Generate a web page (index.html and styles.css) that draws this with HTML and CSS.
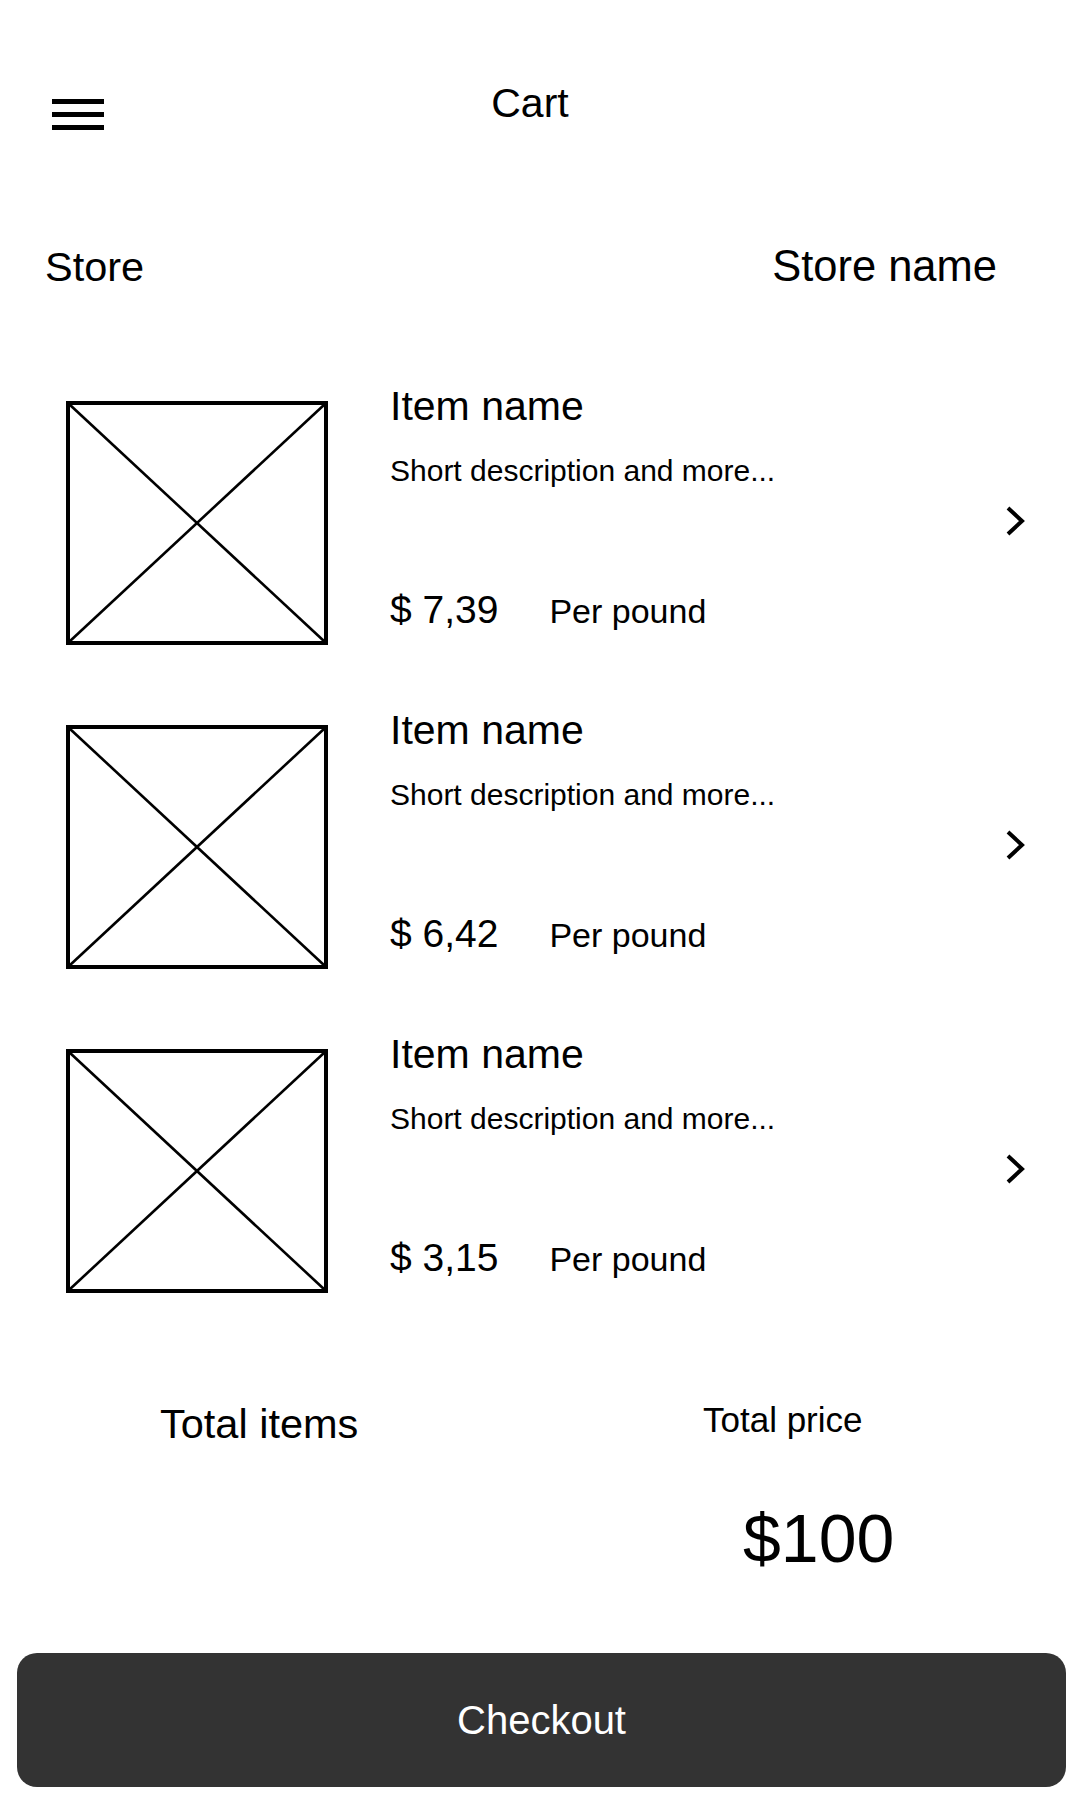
FILE: index.html
```html
<!DOCTYPE html>
<html lang="en">
<head>
  <meta charset="UTF-8">
  <meta name="viewport" content="width=device-width, initial-scale=1.0">
  <title>Cart</title>
  <link rel="stylesheet" href="styles.css">
</head>
<body>
  <header class="topbar">
    <button class="menu" aria-label="Menu">
      <span></span><span></span><span></span>
    </button>
    <h1 class="title">Cart</h1>
    <div></div>
  </header>

  <div class="store-row">
    <span class="store-label">Store</span>
    <span class="store-name">Store name</span>
  </div>

  <main class="items">
    <div class="item">
      <svg class="thumb" width="262" height="244" viewBox="0 0 262 244">
        <rect x="2" y="2" width="258" height="240" fill="none" stroke="#000" stroke-width="4"/>
        <line x1="3" y1="3" x2="259" y2="241" stroke="#000" stroke-width="2.6"/>
        <line x1="259" y1="3" x2="3" y2="241" stroke="#000" stroke-width="2.6"/>
      </svg>
      <div class="info">
        <div class="item-name">Item name</div>
        <div class="item-desc">Short description and more...</div>
        <div class="price-row">
          <span class="price">$ 7,39</span>
          <span class="unit">Per pound</span>
        </div>
      </div>
      <svg class="chevron" width="22" height="32" viewBox="0 0 22 32">
        <polyline points="4,3 18,16 4,29" fill="none" stroke="#000" stroke-width="4"/>
      </svg>
    </div>

    <div class="item">
      <svg class="thumb" width="262" height="244" viewBox="0 0 262 244">
        <rect x="2" y="2" width="258" height="240" fill="none" stroke="#000" stroke-width="4"/>
        <line x1="3" y1="3" x2="259" y2="241" stroke="#000" stroke-width="2.6"/>
        <line x1="259" y1="3" x2="3" y2="241" stroke="#000" stroke-width="2.6"/>
      </svg>
      <div class="info">
        <div class="item-name">Item name</div>
        <div class="item-desc">Short description and more...</div>
        <div class="price-row">
          <span class="price">$ 6,42</span>
          <span class="unit">Per pound</span>
        </div>
      </div>
      <svg class="chevron" width="22" height="32" viewBox="0 0 22 32">
        <polyline points="4,3 18,16 4,29" fill="none" stroke="#000" stroke-width="4"/>
      </svg>
    </div>

    <div class="item">
      <svg class="thumb" width="262" height="244" viewBox="0 0 262 244">
        <rect x="2" y="2" width="258" height="240" fill="none" stroke="#000" stroke-width="4"/>
        <line x1="3" y1="3" x2="259" y2="241" stroke="#000" stroke-width="2.6"/>
        <line x1="259" y1="3" x2="3" y2="241" stroke="#000" stroke-width="2.6"/>
      </svg>
      <div class="info">
        <div class="item-name">Item name</div>
        <div class="item-desc">Short description and more...</div>
        <div class="price-row">
          <span class="price">$ 3,15</span>
          <span class="unit">Per pound</span>
        </div>
      </div>
      <svg class="chevron" width="22" height="32" viewBox="0 0 22 32">
        <polyline points="4,3 18,16 4,29" fill="none" stroke="#000" stroke-width="4"/>
      </svg>
    </div>
  </main>

  <section class="totals">
    <div class="total-items">Total items</div>
    <div class="total-price">
      <div class="total-label">Total price</div>
      <div class="total-value">$100</div>
    </div>
  </section>

  <button class="checkout">Checkout</button>
</body>
</html>
```

FILE: styles.css
```css
body {
  margin: 0;
  font-family: "Liberation Sans", Arial, sans-serif;
  color: #000;
  background: #fff;
}
.topbar {
  display: grid;
  grid-template-columns: 1fr auto 1fr;
  align-items: start;
  padding: 80px 72px 0 52px;
}
.menu {
  display: flex;
  flex-direction: column;
  gap: 8px;
  width: 52px;
  margin-top: 19px;
  padding: 0;
  border: none;
  background: none;
}
.menu span {
  display: block;
  height: 5px;
  background: #000;
}
.title {
  margin: 0;
  font-size: 41px;
  font-weight: normal;
}
.store-row {
  display: flex;
  justify-content: space-between;
  align-items: baseline;
  margin-top: 112px;
  padding: 0 83px 0 45px;
}
.store-label {
  font-size: 41.5px;
}
.store-name {
  font-size: 43.5px;
}
.items {
  display: flex;
  flex-direction: column;
  gap: 62px;
  margin-top: 92px;
  padding: 0 54px 0 66px;
}
.item {
  display: flex;
  align-items: flex-start;
}
.thumb {
  flex-shrink: 0;
  margin-top: 18px;
}
.info {
  margin-left: 62px;
}
.item-name {
  font-size: 41px;
}
.item-desc {
  margin-top: 24px;
  font-size: 30px;
}
.price-row {
  display: flex;
  align-items: baseline;
  gap: 51px;
  margin-top: 100px;
}
.price {
  font-size: 39px;
}
.unit {
  font-size: 34px;
}
.chevron {
  margin-left: auto;
  margin-top: 122px;
}
.totals {
  display: grid;
  grid-template-columns: 543px 1fr;
  margin-top: 107px;
  padding-left: 160px;
}
.total-items {
  font-size: 41.5px;
}
.total-label {
  font-size: 35px;
}
.total-value {
  margin-top: 59px;
  margin-left: 40px;
  font-size: 68px;
}
.checkout {
  display: block;
  width: 1049px;
  height: 134px;
  margin: 76px 0 0 17px;
  border: none;
  border-radius: 20px;
  background: #333;
  color: #fff;
  font-family: "Liberation Sans", Arial, sans-serif;
  font-size: 40px;
}
```
